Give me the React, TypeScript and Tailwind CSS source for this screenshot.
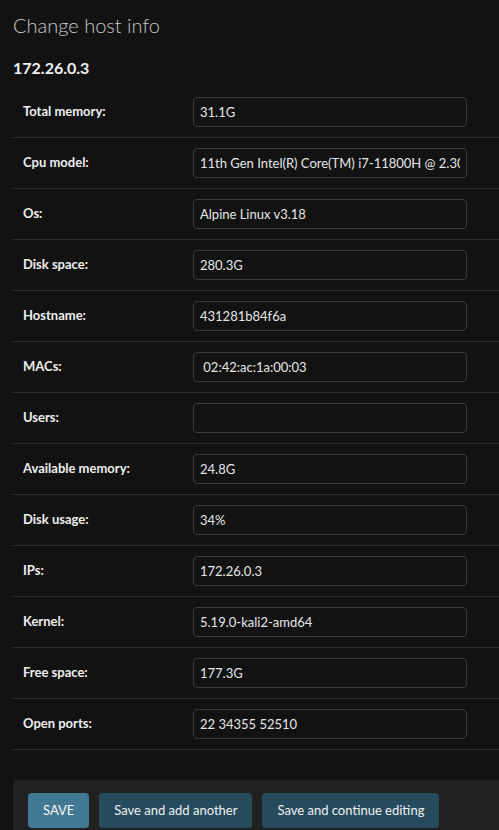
import React from 'react';

const fields: { label: string; value: string }[] = [
  { label: 'Total memory:', value: '31.1G' },
  { label: 'Cpu model:', value: '11th Gen Intel(R) Core(TM) i7-11800H @ 2.30GHz' },
  { label: 'Os:', value: 'Alpine Linux v3.18' },
  { label: 'Disk space:', value: '280.3G' },
  { label: 'Hostname:', value: '431281b84f6a' },
  { label: 'MACs:', value: ' 02:42:ac:1a:00:03' },
  { label: 'Users:', value: '' },
  { label: 'Available memory:', value: '24.8G' },
  { label: 'Disk usage:', value: '34%' },
  { label: 'IPs:', value: '172.26.0.3' },
  { label: 'Kernel:', value: '5.19.0-kali2-amd64' },
  { label: 'Free space:', value: '177.3G' },
  { label: 'Open ports:', value: '22 34355 52510' },
];

export default function App() {
  return (
    <div
      className="min-h-[830px] w-[499px] overflow-hidden bg-[#121212] pl-[13px] text-[#f5f5f5]"
      style={{ fontFamily: 'Lato, "Noto Sans", sans-serif' }}
    >
      <h1 className="pt-[13px] text-[20px] leading-[24px] font-light text-[#c9c9c9]">Change host info</h1>
      <h2 className="mt-[21px] text-[16px] leading-[20px] font-bold text-[#f0f0f0]">172.26.0.3</h2>

      <div className="mt-[9px] w-[520px]">
        {fields.map((f) => (
          <div key={f.label} className="flex items-center border-b border-[#303030] p-[10px]">
            <label className="w-[170px] shrink-0 text-[13px] font-bold text-[#eeeeee]">{f.label}</label>
            <input
              readOnly
              defaultValue={f.value}
              className="h-[30px] w-[274px] rounded-[4px] border border-[#3b3b3b] bg-[#121212] px-[6px] text-[13px] text-[#e6e6e6] outline-none"
              style={{ whiteSpace: 'pre' }}
            />
          </div>
        ))}
      </div>

      <div className="mt-[30px] flex w-[520px] gap-[10px] rounded-[4px] bg-[#212121] px-[15px] pt-[13px] pb-[13px]">
        <button className="h-[35px] rounded-[4px] bg-[#417893] px-[15px] text-[13px] text-[#f5f5f5]">SAVE</button>
        <button className="h-[35px] rounded-[4px] bg-[#264b5d] px-[15px] text-[13px] text-[#f0f0f0]">
          Save and add another
        </button>
        <button className="h-[35px] rounded-[4px] bg-[#264b5d] px-[15px] text-[13px] text-[#f0f0f0]">
          Save and continue editing
        </button>
      </div>
    </div>
  );
}
